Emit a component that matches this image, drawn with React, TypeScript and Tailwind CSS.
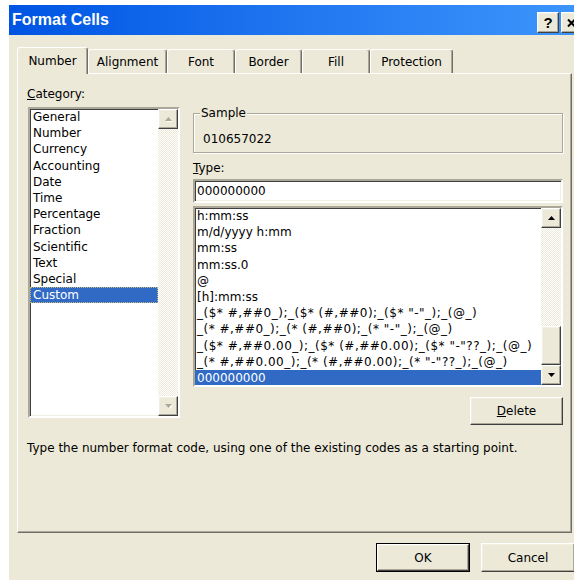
import type { ReactNode } from "react";

const categories = [
  "General",
  "Number",
  "Currency",
  "Accounting",
  "Date",
  "Time",
  "Percentage",
  "Fraction",
  "Scientific",
  "Text",
  "Special",
  "Custom",
];

const formatCodes = [
  "h:mm:ss",
  "m/d/yyyy h:mm",
  "mm:ss",
  "mm:ss.0",
  "@",
  "[h]:mm:ss",
  '_($* #,##0_);_($* (#,##0);_($* "-"_);_(@_)',
  '_(* #,##0_);_(* (#,##0);_(* "-"_);_(@_)',
  '_($* #,##0.00_);_($* (#,##0.00);_($* "-"??_);_(@_)',
  '_(* #,##0.00_);_(* (#,##0.00);_(* "-"??_);_(@_)',
  "000000000",
];

const tabs = ["Number", "Alignment", "Font", "Border", "Fill", "Protection"];
const tabWidths = ["w-[71px]", "w-[79px]", "w-[68px]", "w-[67px]", "w-[68px]", "w-[83px]"];

const raised =
  "border border-t-white border-l-white border-r-[#404040] border-b-[#404040] shadow-[inset_-1px_-1px_#aca899,inset_1px_1px_#f1efe2]";
const sunken =
  "border-2 border-t-[#aca899] border-l-[#aca899] border-r-white border-b-white shadow-[inset_1px_1px_#404040,inset_-1px_-1px_#f1efe2]";
const track = "bg-[repeating-conic-gradient(#ffffff_0_25%,#ece9d8_0_50%)] bg-[length:2px_2px]";

function Arrow({ up, disabled }: { up?: boolean; disabled?: boolean }) {
  const pts = up ? "0,4 7,4 3.5,0" : "0,0 7,0 3.5,4";
  return (
    <svg width="7" height="5" viewBox="0 0 7 5">
      {disabled && <polygon points={pts} transform="translate(1,1)" fill="#ffffff" />}
      <polygon points={pts} fill={disabled ? "#aca899" : "#000000"} />
    </svg>
  );
}

function ScrollButton({ up, disabled }: { up?: boolean; disabled?: boolean }) {
  return (
    <div className={`h-[20px] shrink-0 bg-[#ece9d8] flex items-center justify-center ${raised}`}>
      <Arrow up={up} disabled={disabled} />
    </div>
  );
}

function Button({ children, primary, className = "" }: { children: ReactNode; primary?: boolean; className?: string }) {
  return (
    <div className={`${primary ? "border border-black" : ""} ${className}`}>
      <div className={`h-full w-full flex items-center justify-center bg-[#ece9d8] ${raised}`}>{children}</div>
    </div>
  );
}

export default function App() {
  return (
    <div className="w-[574px] h-[580px] overflow-hidden bg-white pt-[5px] pl-[9px] font-['DejaVu_Sans',sans-serif] text-[12px] text-black">
      <div className="w-[575px] h-[575px] bg-[#ece9d8] flex flex-col">
        {/* caption */}
        <div className="h-[30px] shrink-0 flex items-center pl-[3px] pr-[2px] bg-gradient-to-r from-[#0054e3] to-[#3d96fc]">
          <span className="font-['Liberation_Sans',sans-serif] font-bold text-[16px] text-white">Format Cells</span>
          <div className="ml-auto flex gap-[2px] self-start mt-[7px]">
            <div className={`w-[22px] h-[21px] bg-[#ece9d8] flex items-center justify-center ${raised}`}>
              <span className="font-['Liberation_Sans',sans-serif] font-bold text-[15px] leading-none">?</span>
            </div>
            <div className={`w-[21px] h-[21px] bg-[#ece9d8] flex items-center justify-center ${raised}`}>
              <svg width="9" height="8" viewBox="0 0 9 8">
                <path d="M1 0.5 L8 7.5 M8 0.5 L1 7.5" stroke="#000" strokeWidth="2" />
              </svg>
            </div>
          </div>
        </div>

        {/* tabs */}
        <div className="mt-[12px] ml-[8px] h-[26px] flex items-end">
          {tabs.map((t, i) => (
            <div
              key={t}
              className={`${tabWidths[i]} flex items-center justify-center bg-[#ece9d8] rounded-t-[3px] border-t border-l border-t-white border-l-white border-r border-r-[#716f64] shadow-[inset_-1px_0_#aca899] ${
                i === 0 ? "h-[27px] -mb-px relative z-10" : "h-[24px]"
              }`}
            >
              {t}
            </div>
          ))}
        </div>

        {/* tab page */}
        <div className="ml-[8px] w-[555px] h-[460px] shrink-0 flex flex-col pl-[9px] border border-t-white border-l-white border-r-[#716f64] border-b-[#716f64] shadow-[inset_-1px_-1px_#aca899]">
          <div className="flex">
            <div className="w-[153px] flex flex-col">
              <div className="mt-[12px] h-[16px] leading-[16px]">
                <span className="underline">C</span>ategory:
              </div>
              <div className={`mt-[5px] ml-px w-[152px] h-[311px] bg-white flex ${sunken}`}>
                <div className="flex-1 leading-[16.2px]">
                  {categories.map((c) => (
                    <div
                      key={c}
                      className={`pl-[3px] ${
                        c === "Custom"
                          ? "bg-[#316ac5] text-white outline-1 outline-dotted outline-[#c9b97a] -outline-offset-1"
                          : ""
                      }`}
                    >
                      {c}
                    </div>
                  ))}
                </div>
                <div className={`w-[20px] flex flex-col ${track}`}>
                  <ScrollButton up disabled />
                  <div className="flex-1" />
                  <ScrollButton disabled />
                </div>
              </div>
            </div>

            <div className="ml-[13px] w-[370px] flex flex-col">
              <div className="relative mt-[39px] h-[40px] border border-[#aca899] shadow-[inset_1px_1px_#ffffff,1px_1px_#ffffff]">
                <span className="absolute -top-[8px] left-[6px] bg-[#ece9d8] px-px leading-[14px]">Sample</span>
                <div className="pt-[17px] pl-[9px] leading-[16px]">010657022</div>
              </div>
              <div className="mt-[7px] h-[16px] leading-[16px]">
                <span className="underline">T</span>ype:
              </div>
              <div className={`mt-[3px] h-[24px] bg-white pl-[2px] flex items-center ${sunken}`}>000000000</div>
              <div className={`mt-[3px] h-[181px] bg-white flex overflow-hidden ${sunken}`}>
                <div className="flex-1 overflow-hidden leading-[16.2px] whitespace-nowrap">
                  {formatCodes.map((f) => (
                    <div
                      key={f}
                      className={`pl-[2px] ${f.startsWith("_") ? "tracking-[0.5px]" : ""} ${
                        f === "000000000" ? "bg-[#316ac5] text-white" : ""
                      }`}
                    >
                      {f}
                    </div>
                  ))}
                </div>
                <div className={`w-[20px] flex flex-col ${track}`}>
                  <ScrollButton up />
                  <div className="flex-1" />
                  <div className={`h-[39px] shrink-0 bg-[#ece9d8] ${raised}`} />
                  <ScrollButton />
                </div>
              </div>
              <Button className="mt-[10px] self-end w-[93px] h-[28px]">
                <span>
                  <span className="underline">D</span>elete
                </span>
              </Button>
            </div>
          </div>

          <div className="mt-[16px] leading-[15px]">
            Type the number format code, using one of the existing codes as a starting point.
          </div>
        </div>

        {/* dialog buttons */}
        <div className="mt-[10px] flex gap-[11px] pl-[367px]">
          <Button primary className="w-[94px] h-[29px]">
            OK
          </Button>
          <Button className="w-[94px] h-[29px]">Cancel</Button>
        </div>
      </div>
    </div>
  );
}
